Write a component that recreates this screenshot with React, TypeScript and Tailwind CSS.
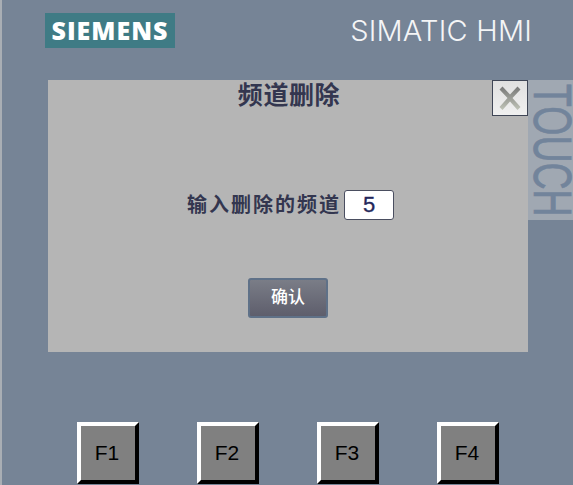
import React from "react";

const cjk = { fontFamily: '"Liberation Sans", "Noto Sans CJK SC", sans-serif' };

function FKey({ label }: { label: string }) {
  return (
    <div
      className="w-[62px] h-[62px] border-[4px] border-t-white border-l-white border-r-black border-b-black bg-[#808080] flex items-center justify-center pr-[2px] text-[21px] text-black"
      style={{ fontFamily: '"Liberation Sans", sans-serif' }}
    >
      {label}
    </div>
  );
}

export default function App() {
  return (
    <div className="w-[573px] h-[485px] overflow-hidden bg-[#768496] border-l-2 border-[#a9aeb4] flex flex-col" style={cjk}>
      <div className="h-[80px] flex items-start justify-between pl-[43px] pr-[41px] pt-[13px]">
        <div className="w-[130px] h-[35px] bg-[#3f7b85] flex items-center justify-center text-white font-extrabold text-[25px] tracking-[1px] leading-none" style={{ fontFamily: '"Open Sans", sans-serif' }}>
          SIEMENS
        </div>
        <div className="text-[#f4f5f6] text-[29px] leading-none mt-[3px] tracking-[0.2px]" style={{ fontFamily: '"Inter", sans-serif', fontWeight: 300 }}>
          SIMATIC HMI
        </div>
      </div>

      <div className="flex items-start pl-[46px]">
        <div className="relative w-[480px] h-[272px] bg-[#b5b5b5] flex flex-col items-center text-[#33364f]">
          <div className="font-bold text-[25px] leading-[30px] tracking-[0.6px] ml-[2px]">频道删除</div>
          <div className="absolute right-0 top-0 w-[36px] h-[36px] border border-[#3f4656] bg-gradient-to-b from-[#e0e0e0] to-[#f0f0f0] flex items-center justify-center">
            <svg width="28" height="28" viewBox="0 0 28 28">
              <defs>
                <linearGradient id="x" x1="0" y1="0" x2="0" y2="1">
                  <stop offset="0" stopColor="#777777" />
                  <stop offset="1" stopColor="#c0c4b8" />
                </linearGradient>
              </defs>
              <path d="M3.5 5.5 L6.5 2.5 L14 10.5 L21.5 2.5 L24.5 5.5 L16.5 14 L24.5 23 L21.5 26 L14 17.5 L6.5 26 L3.5 23 L11.5 14 Z" fill="url(#x)" />
            </svg>
          </div>
          <div className="mt-[80px] ml-[5px] flex items-center gap-[3px] font-bold text-[20px] leading-[30px]">
            <span className="tracking-[2px]">输入删除的频道</span>
            <div className="w-[50px] h-[30px] bg-white border border-[#4a4e60] rounded-[3px] flex items-center justify-center text-[22px] font-normal text-[#23265a] [-webkit-text-stroke:0.3px_#23265a]" style={{ fontFamily: '"Liberation Sans", sans-serif' }}>
              5
            </div>
          </div>
          <div className="mt-[58px] w-[80px] h-[40px] rounded-[3px] border-2 border-[#5f7188] bg-gradient-to-b from-[#7a7d87] to-[#5e5e6c] flex items-center justify-center text-white font-medium text-[17px]">
            确认
          </div>
        </div>
        <div className="w-[45px] h-[140px] bg-[#a0a8b2] flex items-center justify-center pl-[4px]">
          <span className="[writing-mode:vertical-rl] scale-x-[1.45] text-[#72849b] text-[37.5px] leading-[28px] whitespace-nowrap [-webkit-text-stroke:0.5px_#72849b]" style={{ fontFamily: '"Liberation Sans", sans-serif' }}>
            TOUCH
          </span>
        </div>
      </div>

      <div className="flex gap-[58px] pl-[75px] mt-[70px]">
        <FKey label="F1" />
        <FKey label="F2" />
        <FKey label="F3" />
        <FKey label="F4" />
      </div>
    </div>
  );
}
